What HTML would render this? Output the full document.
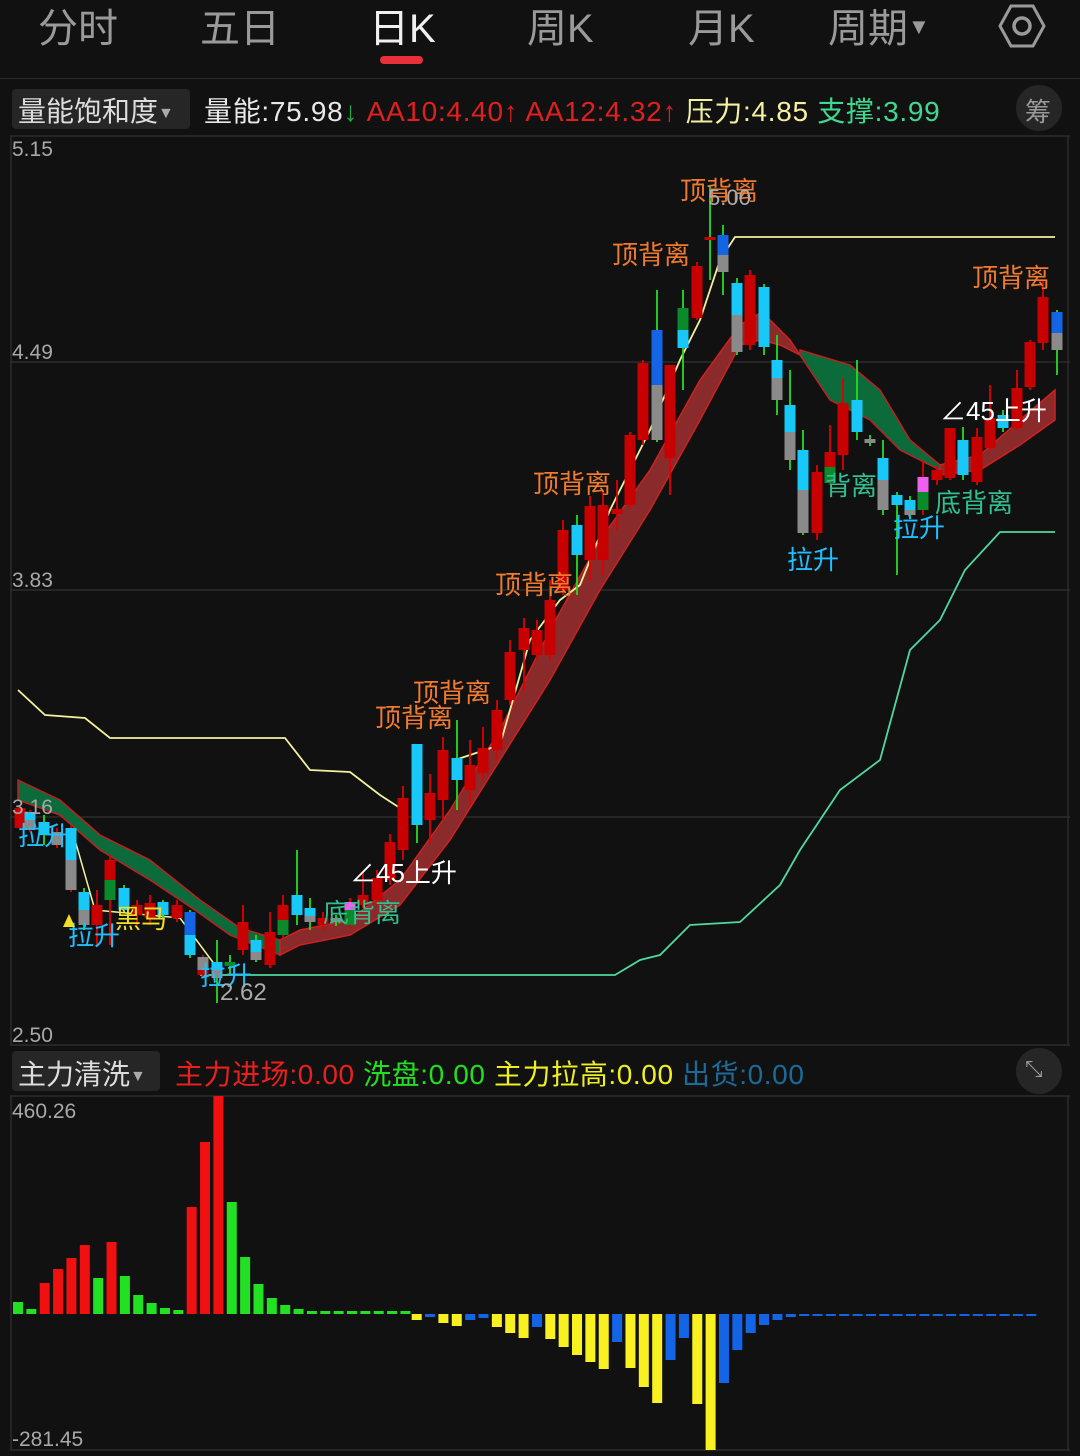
<!DOCTYPE html>
<html><head><meta charset="utf-8"><style>
html,body{margin:0;padding:0;background:#111;}
body{width:1080px;height:1456px;overflow:hidden;position:relative;font-family:"Liberation Sans","Noto Sans CJK SC",sans-serif;}
.t{position:absolute;white-space:nowrap;}
svg text{font-family:"Liberation Sans","Noto Sans CJK SC",sans-serif;}
</style></head><body>
<div class="t" style="left:38px;top:-4px;font-size:40px;color:#9a9a9a">分时</div>
<div class="t" style="left:200px;top:-4px;font-size:40px;color:#9a9a9a">五日</div>
<div class="t" style="left:369px;top:-4px;font-size:40px;color:#f0f0f0">日K</div>
<div style="position:absolute;left:380px;top:56px;width:43px;height:8px;border-radius:4px;background:#e8303a"></div>
<div class="t" style="left:527px;top:-4px;font-size:40px;color:#9a9a9a">周K</div>
<div class="t" style="left:688px;top:-4px;font-size:40px;color:#9a9a9a">月K</div>
<div class="t" style="left:828px;top:-4px;font-size:40px;color:#9a9a9a">周期<span style="font-size:22px;vertical-align:8px">▼</span></div>
<svg style="position:absolute;left:998px;top:2px" width="48" height="48" viewBox="0 0 48 48"><polygon points="13,4 35,4 46,24 35,44 13,44 2,24" fill="none" stroke="#9a9a9a" stroke-width="3"/><circle cx="24" cy="24" r="8" fill="none" stroke="#9a9a9a" stroke-width="3.5"/></svg>
<div style="position:absolute;left:0;top:78px;width:1080px;height:1px;background:#2a2a2a"></div>

<div style="position:absolute;left:12px;top:89px;width:178px;height:40px;background:#262626;border-radius:4px"></div>
<div class="t" style="left:18px;top:90px;font-size:28px;color:#ddd">量能饱和度<span style="font-size:16px;color:#aaa;vertical-align:3px">▼</span></div>
<div class="t" style="left:204px;top:90px;font-size:28px;color:#e8e8e8;letter-spacing:0.7px">量能:75.98<span style="color:#22aa44">↓</span> <span style="color:#e02020">AA10:4.40↑ AA12:4.32↑</span> <span style="color:#f4f0a0">压力:4.85</span> <span style="color:#40d890">支撑:3.99</span></div>
<div style="position:absolute;left:1016px;top:85px;width:46px;height:46px;border-radius:23px;background:#262626"></div>
<div class="t" style="left:1025px;top:92px;font-size:26px;color:#999">筹</div>

<svg id="main" style="position:absolute;left:0;top:0" width="1080" height="1456">
<g stroke="#2c2c2c" stroke-width="1.5">
<line x1="10" y1="136" x2="1070" y2="136"/><line x1="10" y1="362" x2="1070" y2="362"/><line x1="10" y1="590" x2="1070" y2="590"/><line x1="10" y1="817" x2="1070" y2="817"/><line x1="10" y1="1045" x2="1070" y2="1045"/>
<line x1="11" y1="136" x2="11" y2="1045"/><line x1="1068" y1="136" x2="1068" y2="1045"/>
<line x1="10" y1="1096" x2="1070" y2="1096"/><line x1="10" y1="1450" x2="1070" y2="1450"/><line x1="11" y1="1096" x2="11" y2="1450"/><line x1="1068" y1="1096" x2="1068" y2="1450"/>
</g>
<polygon fill="#0b6b3a" stroke="#c02020" stroke-width="1.5" points="18,780 60,800 100,835 150,860 200,900 240,928 280,940 280,955 230,935 195,910 150,880 100,850 60,815 18,800"/>
<polygon fill="#8a2a2a" stroke="#d02020" stroke-width="1.5" points="280,940 300,930 350,920 400,880 450,810 500,730 550,630 600,540 650,470 700,380 740,325 762,312 790,340 800,355 780,345 760,340 740,345 700,420 650,510 600,590 550,680 500,760 450,840 400,905 350,935 300,945 280,955"/>
<polygon fill="#0b6b3a" stroke="#c02020" stroke-width="1.5" points="800,350 850,365 880,390 910,440 940,465 940,470 900,450 870,420 830,400 800,355"/>
<polygon fill="#8a2a2a" stroke="#d02020" stroke-width="1.5" points="940,465 980,455 1020,420 1055,390 1055,420 1020,445 980,470 940,475"/>
<polyline fill="none" stroke="#f4f0a0" stroke-width="1.8" points="18,690 45,715 85,718 110,738 285,738 310,770 350,772 380,795 400,808"/>
<polyline fill="none" stroke="#f4f0a0" stroke-width="1.8" points="455,760 500,745 530,640 560,600 580,585 610,510 650,430 680,360 700,320 720,260 735,237 1055,237"/>
<polyline fill="none" stroke="#f4f0a0" stroke-width="1.5" points="75,840 95,910 180,918 215,965"/>
<polyline fill="none" stroke="#50d8a0" stroke-width="1.8" points="200,975 615,975 640,960 660,955 690,925 740,922 780,885 800,850 840,790 880,760 910,650 940,620 965,570 1000,532 1055,532"/>
<g id="candles"></g>
<g id="bars"></g>
<g font-size="26">
<text x="680" y="200" fill="#f07a30">顶背离</text>
<text x="708" y="205" fill="#aaa" font-size="22">5.00</text>
<text x="612" y="264" fill="#f07a30">顶背离</text>
<text x="972" y="287" fill="#f07a30">顶背离</text>
<text x="533" y="493" fill="#f07a30">顶背离</text>
<text x="495" y="594" fill="#f07a30">顶背离</text>
<text x="413" y="702" fill="#f07a30">顶背离</text>
<text x="375" y="727" fill="#f07a30">顶背离</text>
<text x="18" y="845" fill="#20c0ff">拉升</text>
<text x="68" y="945" fill="#20c0ff">拉升</text>
<text x="200" y="985" fill="#20c0ff">拉升</text>
<text x="787" y="569" fill="#20c0ff">拉升</text>
<text x="893" y="537" fill="#20c0ff">拉升</text>
<text x="323" y="922" fill="#30c090">底背离</text>
<text x="825" y="495" fill="#30c090">背离</text>
<text x="935" y="512" fill="#30c090">底背离</text>
<text x="350" y="882" fill="#fff">∠45上升</text>
<text x="940" y="420" fill="#fff">∠45上升</text>
<text x="115" y="928" fill="#f0e020">黑马</text>
<text x="220" y="1000" fill="#aaa" font-size="24">2.62</text>
</g>
<polygon points="63,927 69,914 75,927" fill="#f0e020"/>
<g font-size="21" fill="#a8a8a8">
<text x="12" y="156">5.15</text><text x="12" y="359">4.49</text><text x="12" y="587">3.83</text><text x="12" y="814">3.16</text><text x="12" y="1042">2.50</text>
<text x="12" y="1118">460.26</text><text x="12" y="1446">-281.45</text>
</g>
</svg>

<div style="position:absolute;left:12px;top:1051px;width:148px;height:40px;background:#262626;border-radius:4px"></div>
<div class="t" style="left:18px;top:1053px;font-size:28px;color:#ddd">主力清洗<span style="font-size:16px;color:#aaa;vertical-align:3px">▼</span></div>
<div class="t" style="left:175px;top:1053px;font-size:28px;letter-spacing:0.6px"><span style="color:#e82020">主力进场:0.00</span> <span style="color:#20e020">洗盘:0.00</span> <span style="color:#f0f020">主力拉高:0.00</span> <span style="color:#1a6a9a">出货:0.00</span></div>
<div style="position:absolute;left:1016px;top:1048px;width:46px;height:46px;border-radius:23px;background:#262626"></div>
<div class="t" style="left:1025px;top:1056px;font-size:22px;color:#999">⤡</div>

<script>
var C={R:"#c80000",C:"#18c8f8",G:"#8a8a8a",B:"#1464e6",N:"#0a8a2a",P:"#f060f0"};
var W={r:"#e00000",g:"#22dd22"};
var d=[
[20,[[808,828,"R"]],805,830,"r"],[30,[[812,820,"C"],[820,830,"G"]],810,832,"r"],[44,[[822,835,"C"]],815,845,"g"],[57,[[832,845,"G"]],828,848,"r"],
[71,[[828,860,"C"],[860,890,"G"]],826,892,"r"],[84,[[892,910,"C"],[910,925,"G"]],888,930,"g"],[97,[[905,925,"R"]],890,945,"r"],
[110,[[860,880,"R"],[880,900,"N"]],855,945,"r"],[124,[[888,910,"C"]],885,912,"g"],[137,[[905,915,"R"]],900,925,"r"],[150,[[903,918,"R"]],895,925,"r"],
[163,[[902,915,"C"]],900,918,"g"],[177,[[905,918,"R"]],900,922,"r"],[190,[[912,935,"B"],[935,955,"C"]],910,958,"g"],[203,[[957,970,"G"],[970,975,"R"]],955,978,"r"],
[217,[[962,970,"C"],[970,978,"G"]],940,1003,"g"],[230,[[962,966,"N"]],955,975,"g"],[243,[[922,950,"R"]],905,955,"r"],[256,[[940,952,"C"],[952,960,"G"]],935,962,"g"],
[270,[[932,965,"R"]],912,968,"r"],[283,[[905,920,"R"],[920,935,"N"]],895,938,"r"],[297,[[895,915,"C"]],850,925,"g"],[310,[[908,916,"C"],[916,922,"G"]],898,930,"g"],
[323,[[918,925,"R"]],912,930,"r"],[336,[[918,922,"G"]],915,926,"g"],[350,[[902,910,"P"],[910,925,"N"]],898,927,"r"],[363,[[895,905,"R"]],873,908,"r"],
[377,[[878,900,"R"]],870,905,"r"],[390,[[842,880,"R"]],834,885,"r"],[403,[[798,850,"R"]],786,860,"r"],[417,[[744,825,"C"]],744,843,"g"],
[430,[[793,820,"R"]],774,843,"r"],[443,[[750,800,"R"]],737,820,"r"],[457,[[758,780,"C"]],720,810,"g"],[470,[[765,790,"R"]],740,805,"r"],
[483,[[748,773,"R"]],727,780,"r"],[497,[[710,750,"R"]],700,760,"r"],[510,[[652,700,"R"]],640,705,"r"],[524,[[628,650,"R"]],618,690,"r"],
[537,[[630,655,"R"]],620,660,"r"],[550,[[600,655,"R"]],580,660,"r"],[563,[[530,590,"R"]],520,595,"r"],[577,[[525,555,"C"]],515,595,"g"],
[590,[[506,560,"R"]],496,580,"r"],[603,[[505,560,"R"]],490,575,"r"],[617,[[509,514,"R"]],480,530,"r"],[630,[[435,505,"R"]],432,508,"r"],
[643,[[363,440,"R"]],360,445,"r"],[657,[[330,385,"B"],[385,440,"G"]],290,442,"g"],[670,[[365,458,"R"]],365,495,"r"],[683,[[308,330,"N"],[330,348,"C"]],290,390,"g"],
[697,[[266,318,"R"]],262,320,"r"],[710,[[237,240,"R"]],185,280,"g"],[723,[[235,255,"B"],[255,272,"G"]],225,295,"g"],[737,[[283,315,"C"],[315,352,"G"]],278,355,"g"],
[750,[[275,345,"R"]],270,350,"r"],[764,[[287,347,"C"]],284,355,"g"],[777,[[360,378,"C"],[378,400,"G"]],335,415,"g"],[790,[[405,432,"C"],[432,460,"G"]],370,470,"g"],
[803,[[450,490,"C"],[490,533,"G"]],430,535,"g"],[817,[[472,533,"R"]],465,540,"r"],[830,[[452,467,"R"],[467,483,"N"]],425,485,"r"],[843,[[403,455,"R"]],378,470,"r"],
[857,[[400,432,"C"]],360,440,"g"],[870,[[439,443,"G"]],435,446,"g"],[883,[[458,480,"C"],[480,510,"G"]],440,515,"g"],[897,[[495,505,"C"]],492,575,"g"],
[910,[[500,510,"C"],[510,515,"G"]],496,518,"g"],[923,[[477,492,"P"],[492,510,"N"]],460,515,"r"],[937,[[470,480,"R"]],466,485,"r"],[950,[[428,478,"R"]],428,480,"r"],
[963,[[440,475,"C"]],427,480,"g"],[977,[[437,482,"R"]],428,485,"r"],[990,[[418,448,"R"]],385,450,"r"],[1003,[[415,428,"C"]],410,432,"g"],
[1017,[[388,428,"R"]],370,430,"r"],[1030,[[342,387,"R"]],340,390,"r"],[1043,[[297,343,"R"]],280,350,"r"],[1057,[[312,333,"B"],[333,350,"G"]],310,375,"g"]];
var s="";
d.forEach(function(c){s+='<rect x="'+(c[0]-0.9)+'" y="'+c[2]+'" width="1.8" height="'+(c[3]-c[2])+'" fill="'+W[c[4]]+'"/>';
c[1].forEach(function(b){s+='<rect x="'+(c[0]-5.5)+'" y="'+b[0]+'" width="11" height="'+Math.max(2,b[1]-b[0])+'" fill="'+C[b[2]]+'"/>';});});
document.getElementById("candles").innerHTML=s;
var pos=[[12,"g"],[5,"g"],[31,"r"],[45,"r"],[56,"r"],[69,"r"],[36,"g"],[72,"r"],[38,"g"],[19,"g"],[11,"g"],[6,"g"],[4,"g"],[107,"r"],[172,"r"],[218,"r"],[112,"g"],[57,"g"],[30,"g"],[16,"g"],[9,"g"],[5,"g"],[3,"g"],[3,"g"],[3,"g"],[3,"g"],[3,"g"],[3,"g"],[3,"g"],[3,"g"]];
var neg=[[6,"y"],[3,"b"],[9,"y"],[12,"y"],[6,"b"],[4,"b"],[13,"y"],[19,"y"],[24,"y"],[13,"b"],[25,"y"],[33,"y"],[41,"y"],[48,"y"],[55,"y"],[28,"b"],[54,"y"],[73,"y"],[89,"y"],[46,"b"],[24,"b"],[90,"y"],[136,"y"],[69,"b"],[36,"b"],[19,"b"],[11,"b"],[6,"b"],[3,"b"]];
while(neg.length<47)neg.push([2,"b"]);
var BC={g:"#22e022",r:"#f01010",y:"#f8f020",b:"#1464e6"};var z=1314,t="";
pos.forEach(function(p,i){var x=13+i*13.36;t+='<rect x="'+x+'" y="'+(z-p[0])+'" width="10" height="'+p[0]+'" fill="'+BC[p[1]]+'"/>';});
neg.forEach(function(p,i){var x=411.7+i*13.36;t+='<rect x="'+x+'" y="'+z+'" width="10" height="'+p[0]+'" fill="'+BC[p[1]]+'"/>';});
document.getElementById("bars").innerHTML=t;
</script>
</body></html>
